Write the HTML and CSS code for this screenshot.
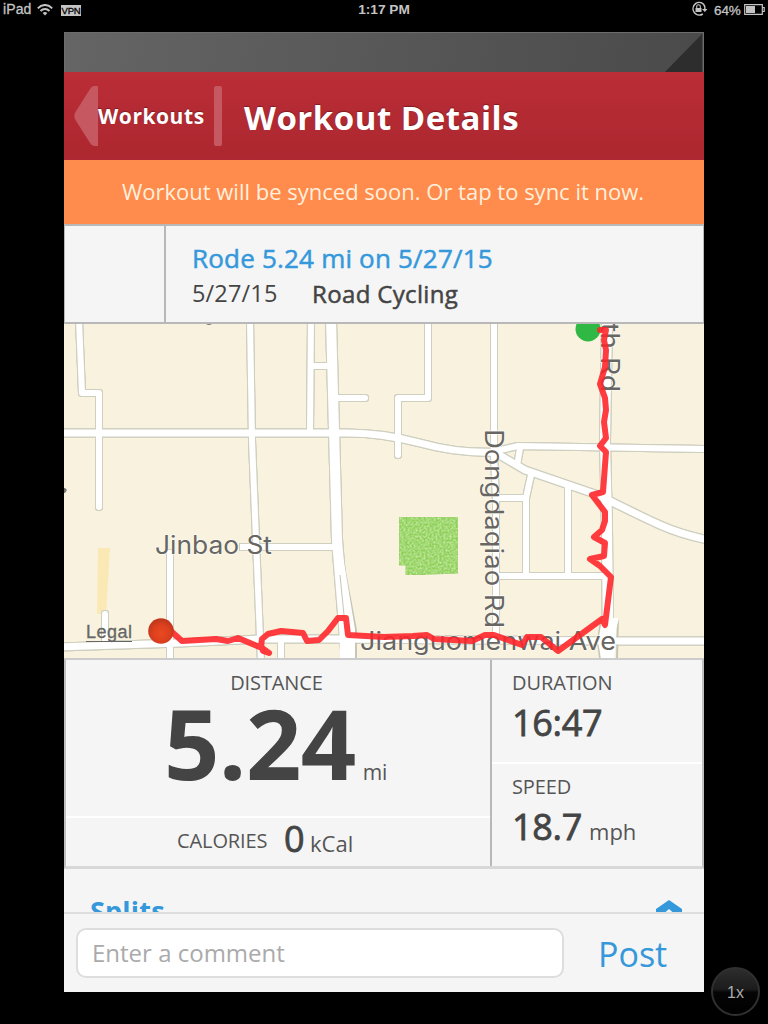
FILE: index.html
```html
<!DOCTYPE html>
<html lang="en">
<head>
<meta charset="utf-8">
<title>Workout Details</title>
<link rel="stylesheet" href="styles.css">
</head>
<body>
<div class="status">
  <span class="device">iPad</span>
  <svg class="wifi" width="16" height="12" viewBox="0 0 16 12"><g fill="none" stroke="#c4c4c4" stroke-width="1.9"><path d="M.8 4.3C5-.2 11-.2 15.2 4.3"/><path d="M3.5 7C6.200 4.300 9.800 4.300 12.500 7"/></g><path d="M5.600 9Q8 7 10.400 9L8 11.600Z" fill="#c4c4c4"/></svg>
  <span class="vpn">VPN</span>
  <span class="clock">1:17 PM</span>
  <span class="right">
    <svg width="17" height="16" viewBox="0 0 17 16"><path d="M11.500 2.300A6.300 6.300 0 1 0 11.800 13M10.500 1.800A6.300 6.300 0 0 1 13.800 8.500" fill="none" stroke="#c4c4c4" stroke-width="1.500"/><path d="M11 8H16.500L13.800 11Z" fill="#c4c4c4"/><path d="M4.500 7H10.500V11H4.500Z" fill="#c4c4c4"/><path d="M5.700 7V5.500A1.800 1.800 0 0 1 9.300 5.500V7" fill="none" stroke="#c4c4c4" stroke-width="1.100"/></svg>
    <span class="percent">64%</span>
    <svg class="battery" width="21" height="11" viewBox="0 0 21 11"><path d="M.7.7H18.300V10.300H.7ZM18.500 3.500H20.200V7.500H18.500" fill="none" stroke="#c4c4c4" stroke-width="1.200"/><path d="M2 2H11V9H2Z" fill="#c4c4c4"/></svg>
  </span>
</div>
<main class="phone">
  <div class="hero"><svg width="40" height="40" viewBox="0 0 40 40"><path d="M1 40L39 1V40Z" fill="#2d2d2d"/></svg></div>
  <header class="nav">
    <svg class="arrow" width="24" height="60" viewBox="0 0 24 60"><path d="M24 0H20Q18 0 16 3L1.500 26Q-1 30 1.500 34L16 57Q18 60 20 60H24Z" fill="#c55860"/></svg>
    <span class="back">Workouts</span>
    <i class="divider"></i>
    <h1 class="title">Workout Details</h1>
  </header>
  <div class="sync">Workout will be synced soon. Or tap to sync it now.</div>
  <section class="summary">
    <div class="photo"></div>
    <div class="info">
      <div class="headline">Rode 5.24 mi on 5/27/15</div>
      <div class="meta"><span class="date">5/27/15</span><span class="sport">Road Cycling</span></div>
    </div>
  </section>
  <svg class="map" width="640" height="334" viewBox="64 324 640 334">
    <defs>
      <filter id="grass" x="0" y="0" width="1" height="1"><feTurbulence type="fractalNoise" baseFrequency=".5" numOctaves="2" seed="4"/><feColorMatrix values="0 0 0 0 .8  0 0 0 0 .95  0 0 0 0 .55  1.200 0 0 0 -.42"/><feComposite in2="SourceGraphic" operator="in" result="n"/><feMerge><feMergeNode in="SourceGraphic"/><feMergeNode in="n"/></feMerge></filter>
      <radialGradient id="pin" cx=".5" cy=".6"><stop offset="0" stop-color="#e94a20"/><stop offset=".7" stop-color="#dc3f1e"/><stop offset="1" stop-color="#c4391d"/></radialGradient>
      <g id="roads" fill="none" stroke-linejoin="round">
        <g class="lane">
          <path d="M79 320L82 393H99V507" stroke-linecap="round"/>
          <path d="M250 320L252 440L256 540L261 662"/>
          <path d="M311 320L310 432M312 366H331"/>
          <path d="M334 398H365" stroke-linecap="round"/>
          <path d="M428 320V398H398V455" stroke-linecap="round"/>
          <path d="M494 320V455L496 500V640"/>
          <path d="M496 451L518 446L704 449"/>
          <path d="M520 448L517 466M531 475L526 498V576M496 498H526M568 486V576M496 576H608"/>
          <path d="M240 547H336"/>
          <path d="M170 550V662M281 642V662"/>
          <path d="M105 614V642" stroke-linecap="round"/>
        </g>
        <g class="street">
          <path d="M60 433H340Q380 432 420 443T496 452"/>
          <path d="M496 453L525 470L598 495Q640 516 660 525T708 540"/>
          <path d="M60 647L180 643L260 639H330L620 641H710"/>
        </g>
        <g class="avenue">
          <path d="M331 320L334 430L337 540L347 662"/>
          <path d="M607 320L605 440L607 530L608 658"/>
        </g>
      </g>
    </defs>
    <rect class="land" x="64" y="324" width="640" height="334"/>
    <path d="M98 548H110L106 614H97Z" fill="#fae9b5"/>
    <path d="M399 517H458V573L406 575V565H399Z" fill="#8ed158" stroke="#8bcb5a" filter="url(#grass)"/>
    <use href="#roads" class="casing"/>
    <path d="M340 545L356 630V660M601 620L598 641L600 658M618 618L617 658" fill="none" stroke="#c6c6b6" stroke-width="2"/>
    <use href="#roads" class="fill"/>
    <path d="M338 525L355 630V659H340ZM602 480H611L613 618H619L616 630V641L614 659H601L598 641L604 610Z" fill="#fff"/>
    <path d="M340 575L344 615" stroke="#c6c6b6"/>
    <path d="M206 324Q209 326 212 324ZM64 488H65L67 490L65 493H64Z" fill="#777"/>
    <g class="label">
      <text x="155" y="554" textLength="117" lengthAdjust="spacingAndGlyphs">Jinbao St</text>
      <text x="360" y="650" textLength="256" lengthAdjust="spacingAndGlyphs">Jianguomenwai Ave</text>
      <text transform="translate(485 429) rotate(90)" textLength="199" lengthAdjust="spacingAndGlyphs">Dongdaqiao Rd</text>
      <text transform="translate(601 323) rotate(90)" textLength="69" lengthAdjust="spacingAndGlyphs">th Rd</text>
    </g>
    <text class="legal" x="86" y="638" textLength="46">Legal</text>
    <path d="M86 641.500H132" stroke="#666"/>
    <circle cx="588" cy="329" r="12.500" fill="#30b844"/>
    <path class="route" d="M161 629L172 632L182 641L216 639L228 641L238 638L262 648L269 653L263 651L261 646L262 639L268 634L281 631L303 633L307 641L319 640L328 631L338 618H346L348 635L384 637L413 636L427 635L434 639L472 641L485 635H494L522 645L527 637H541L558 651L602 619L605 625L611 577L600 566L590 559L604 556L605 543L594 537L602 530L605 521V512L592 495L603 492L606 452L600 446L606 438L604 422L606 410L605 398L600 384L605 367L606 350L604 340L606 330H600"/>
    <circle cx="161" cy="631" r="12.800" fill="url(#pin)"/>
  </svg>
  <section class="stats">
    <div class="main">
      <div class="distance"><div class="caption">DISTANCE</div><div class="big"><b>5.24</b><span class="unit mi">mi</span></div></div>
      <div class="calories"><span class="caption">CALORIES</span><span class="value zero">0</span><span class="unit kcal">kCal</span></div>
    </div>
    <div class="side">
      <div class="cell duration"><div class="caption">DURATION</div><div class="value">16:47</div></div>
      <div class="cell speed"><div class="caption">SPEED</div><div class="value">18.7<span class="unit mph">mph</span></div></div>
    </div>
  </section>
  <section class="splits">
    <span class="splits-title">Splits</span>
    <svg width="28" height="18" viewBox="0 0 28 18"><path d="M1 9L14 0L27 9V16H22L14 9L6 16H1Z" fill="#3498db"/></svg>
  </section>
  <footer class="comment">
    <div class="field">Enter a comment</div>
    <span class="post">Post</span>
  </footer>
</main>
<div class="zoom">1x</div>
</body>
</html>
```

FILE: styles.css
```css
* { box-sizing: border-box; }
body { margin: 0; width: 768px; height: 1024px; overflow: hidden; background: #000; font-family: "Open Sans", sans-serif; color: #444; position: relative; }
.status { height: 20px; display: flex; align-items: center; position: relative; color: #c4c4c4; font: 14px/19px "Liberation Sans", sans-serif; padding: 0 3px; -webkit-text-stroke: .3px #c4c4c4; }
.device { width: 34px; letter-spacing: .1px; line-height: 17px; padding-bottom: 2px; }
.wifi { display: block; }
.vpn { margin-left: 8px; width: 20px; height: 11px; background: #c4c4c4; color: #000; font-size: 9.500px; line-height: 12px; letter-spacing: -.2px; text-align: center; -webkit-text-stroke: .3px #000; }
.clock { position: absolute; left: 0; top: 0; width: 768px; text-align: center; font-weight: bold; font-size: 13.700px; -webkit-text-stroke: 0; }
.right { margin-left: auto; display: flex; align-items: center; }
.right svg:first-child { margin-top: -2px; }
.battery { margin-top: -2px; }
.percent { margin-left: 6px; width: 30px; font-size: 13.500px; letter-spacing: -.1px; }
.phone { width: 640px; height: 960px; margin: 12px 64px 0; background: #f5f5f5; display: flex; flex-direction: column; overflow: hidden; white-space: nowrap; }
.hero { height: 40px; background: linear-gradient(100deg, #656565, #4a4a4a); border: 1px solid #6c6c6c; border-bottom: 0; display: flex; justify-content: flex-end; flex: none; }
.nav { height: 88px; flex: none; display: flex; align-items: center; padding-left: 10px; background: linear-gradient(#bb2d37, #ac272f); color: #fff; text-shadow: 0 -1px 1px #7d1c23; }
.back { width: 116px; font-weight: 700; font-size: 21px; line-height: 30px; letter-spacing: .55px; padding-bottom: 1px; }
.divider { width: 8px; height: 60px; background: #c55860; border-radius: 2px; }
.title { margin: 0 0 0 22px; padding-top: 4px; font-size: 33px; line-height: 44px; font-weight: 700; letter-spacing: .5px; }
.sync { height: 64px; flex: none; background: #ff8b4c; color: #fff0dc; text-align: center; font-size: 22px; line-height: 63px; padding-right: 2px; }
.summary { height: 100px; flex: none; display: flex; border: 1px solid #b8b8b8; border-width: 2px 1px; background: #f5f5f5; }
.photo { width: 101px; border-right: 2px solid #b8b8b8; }
.info { padding: 15px 0 0 26px; }
.headline { font-size: 26px; line-height: 35px; letter-spacing: .2px; color: #3498db; -webkit-text-stroke: .5px; }
.meta { font-size: 23.500px; line-height: 35px; display: flex; }
.date { width: 120px; letter-spacing: .15px; }
.sport { font-size: 24px; letter-spacing: .35px; -webkit-text-stroke: .5px; }
.map { display: block; flex: none; overflow: hidden; }
.land { fill: #f8f2de; }
.fill { stroke: #fff; }
.lane { stroke-width: 6px; }
.street { stroke-width: 7px; }
.avenue { stroke-width: 10px; }
.casing { stroke: #cfcfc0; filter: drop-shadow(1px 0 #cfcfc0) drop-shadow(-1px 0 #cfcfc0) drop-shadow(0 1px #cfcfc0) drop-shadow(0 -1px #cfcfc0); }
.label { font: 400 25px Inter, sans-serif; fill: #686662; stroke: #fff; stroke-width: 1.5px; stroke-opacity: .65; paint-order: stroke; }
.legal { font: 18px "Liberation Sans", sans-serif; fill: #666; stroke: #666; stroke-width: .3px; }
.route { fill: none; stroke: #ff2428; stroke-opacity: .89; stroke-width: 6px; stroke-linejoin: round; stroke-linecap: round; }
.stats { height: 211px; flex: none; display: flex; border: 1px solid #c0c0c0; border-width: 2px 2px 3px; border-color: #ccc #c0c0c0 #d8d8d8; }
.main { width: 426px; border-right: 2px solid #b8b8b8; }
.distance { height: 158px; border-bottom: 2px solid #fff; padding-top: 8px; }
.caption { font-size: 20px; line-height: 30px; letter-spacing: -.1px; color: #555; }
.distance .caption { text-align: center; padding-right: 3px; }
.big { padding-left: 98px; line-height: 88px; display: flex; align-items: baseline; }
.big b { font-size: 97px; letter-spacing: -.6px; }
.unit { font-weight: 400; font-size: 21px; letter-spacing: 0; color: #555; -webkit-text-stroke: 0; }
.mi { margin-left: 7px; }
.calories { padding-left: 111px; display: flex; height: 48px; }
.calories .caption { line-height: 46px; width: 107px; }
.value { font-size: 36px; line-height: 49px; font-weight: 400; letter-spacing: -.3px; -webkit-text-stroke: .8px; }
.value.zero { width: 26px; line-height: 42px; }
.kcal { line-height: 51px; font-size: 22px; }
.side { flex: 1; }
.cell { height: 104px; padding: 8px 0 0 20px; }
.duration { border-bottom: 2px solid #fff; }
.mph { margin-left: 7px; font-size: 22px; }
.splits { height: 43px; flex: none; overflow: hidden; display: flex; justify-content: space-between; align-items: flex-start; padding: 24px 21px 0 26px; }
.splits-title { color: #3498db; font-weight: 700; font-size: 27px; letter-spacing: .2px; line-height: 36px; }
.splits svg { margin-top: 7px; flex: none; }
.comment { height: 80px; flex: none; border-top: 2px solid #ddd; background: #f5f5f5; display: flex; padding: 14px 12px 0; }
.field { width: 488px; height: 50px; border: 2px solid #ddd; border-radius: 10px; background: #fff; color: #aaa; font-size: 24px; line-height: 46px; padding-left: 14px; }
.post { margin-left: 34px; color: #3498db; font-size: 34px; line-height: 52px; }
.zoom { position: absolute; left: 711px; top: 967px; width: 49px; height: 49px; border: 2px solid #303030; border-radius: 50%; background: linear-gradient(#2d2d2d, #1c1c1c 45%, #050505 52%, #000); color: #aaa; font: 16px/47px "Liberation Sans", sans-serif; text-align: center; }
```
